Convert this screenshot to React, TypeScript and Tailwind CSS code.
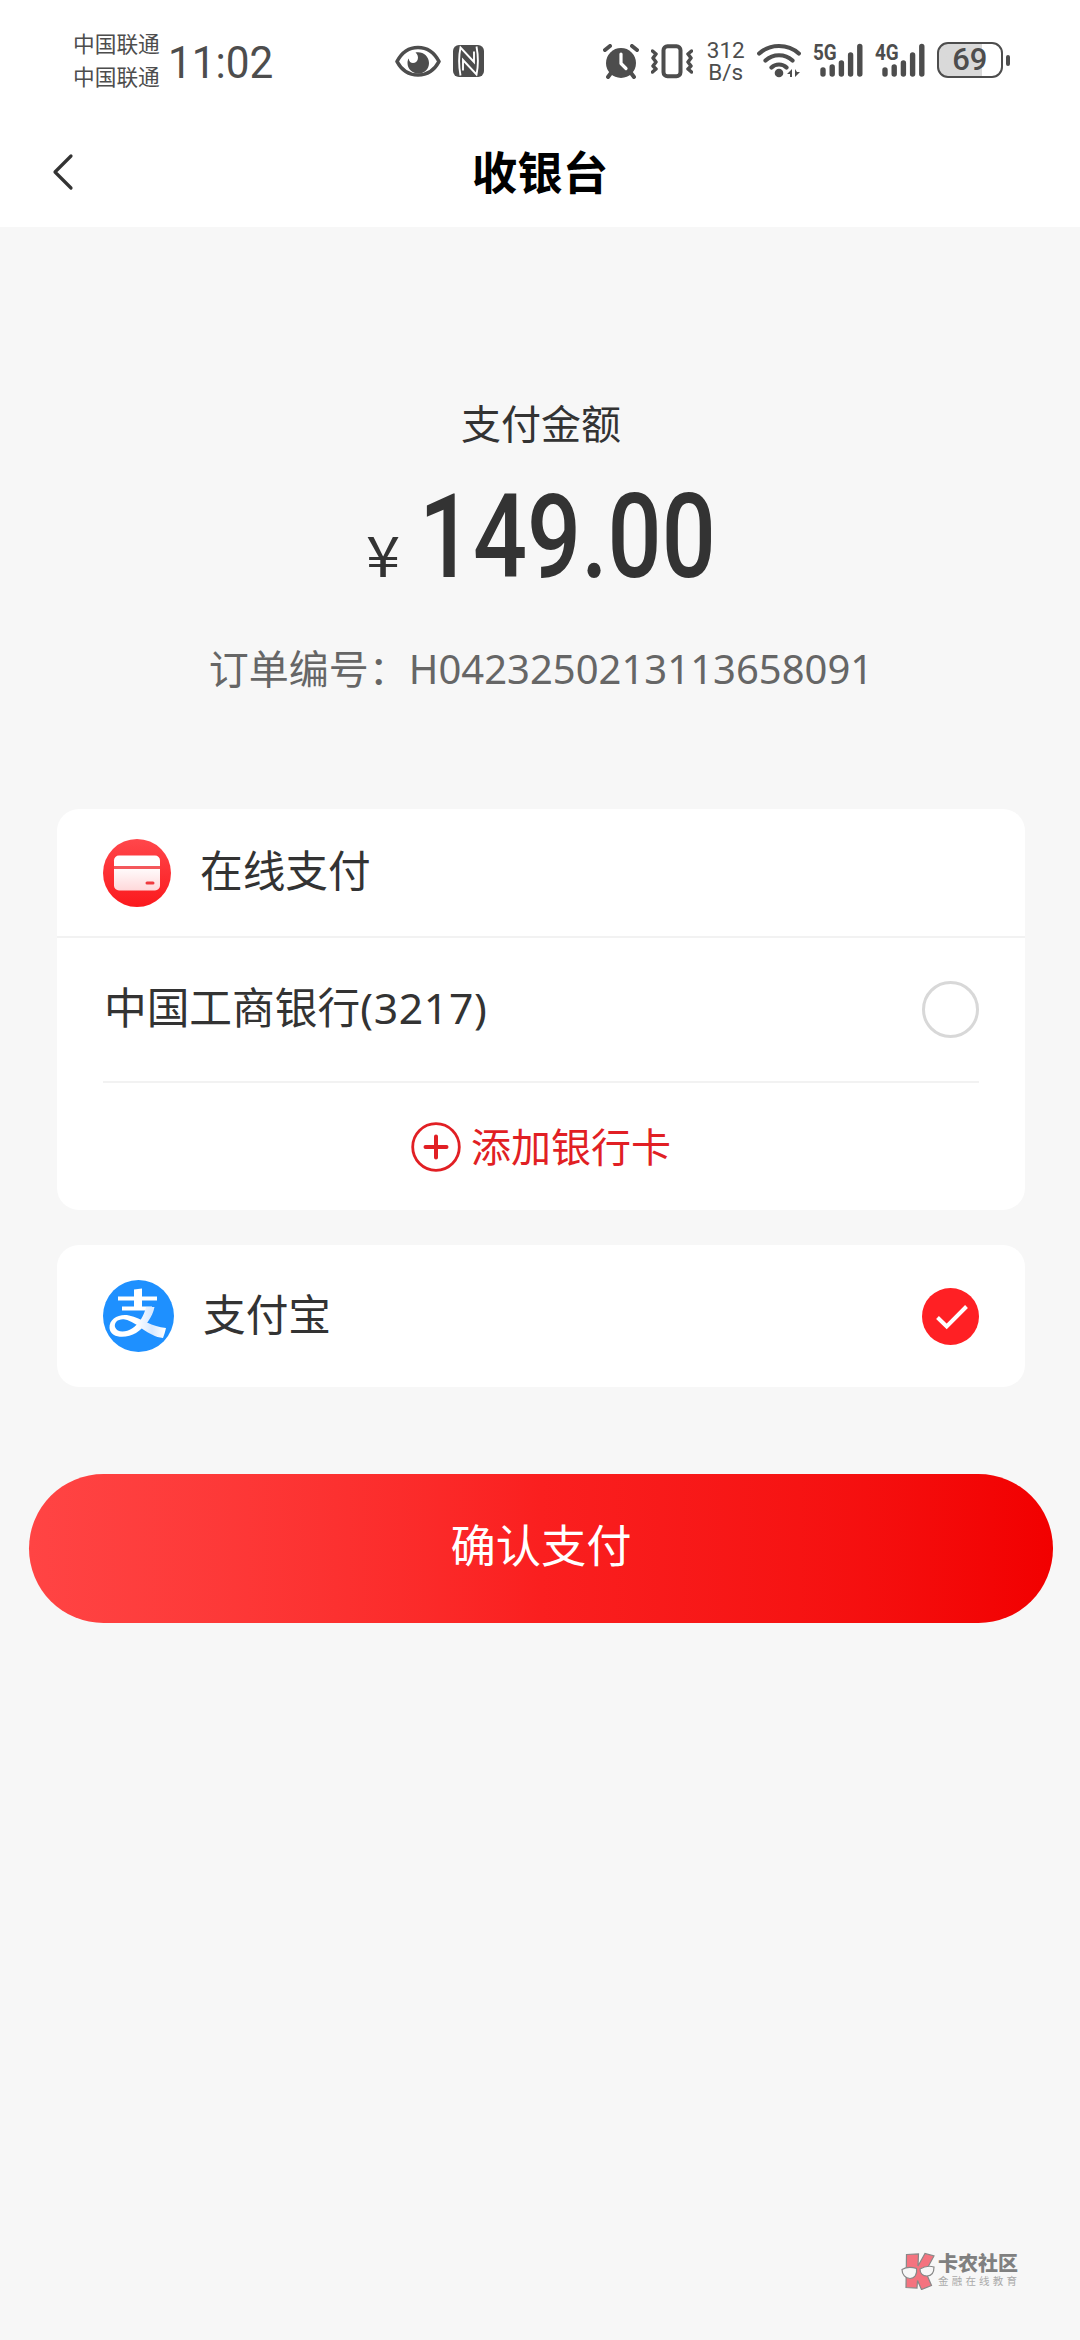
import React, { useState } from 'react';

type Method = 'icbc' | 'alipay';

const StatusBar: React.FC = () => {
    return (
        <div className="flex h-[116px] items-start text-[#4d4d4d]">
            <div className="ml-[73px] mt-[27px] flex flex-col text-[21.7px] leading-[33px]">
                <span>中国联通</span>
                <span>中国联通</span>
            </div>
            <div className="ml-[8px] mt-[36px] w-[106px] origin-left scale-x-[0.94] whitespace-nowrap font-[Roboto] text-[45px] leading-[53px]">11:02</div>

            <svg className="ml-[121px] mt-[45px] shrink-0" width="46" height="33" viewBox="0 0 46 33" fill="none">
                <path d="M2 16.500C7 7 15 2.500 23 2.500s16 4.500 21 14c-5 9.500-13 13.500-21 13.500S7 26 2 16.500z" stroke="#4d4d4d" strokeWidth="3.600" strokeLinejoin="round" />
                <path d="M20.500 7.500c7-1.500 13.500 3.500 13.500 10.500 0 6-4.500 10.500-10.500 10.500S12.500 24 12.500 18c0-2 .5-3.500 1.200-4.500.3 3 2 4.500 4.300 4.500 5 0 7-6.500 2.500-10.500z" fill="#4d4d4d" />
            </svg>
            <svg className="ml-[12px] mt-[45px] shrink-0" width="31" height="32" viewBox="0 0 31 32">
                <rect width="31" height="32" rx="6" fill="#4d4d4d" />
                <path d="M7.500 30.500C5.500 20 5.500 12 7.500 2.500L21 17V6.500M23.500 1.500c2 10.500 2 18.500 0 28L10 15v10.500" fill="none" stroke="#fff" strokeWidth="1.900" />
            </svg>

            <svg className="ml-[119px] mt-[44px] shrink-0" width="36" height="35" viewBox="0 0 36 35" fill="none">
                <circle cx="18" cy="19" r="15" fill="#4d4d4d" />
                <path d="M2 6l5-4M34 6l-5-4M8 29l-3 4M28 29l3 4" stroke="#4d4d4d" strokeWidth="4" strokeLinecap="round" />
                <path d="M18 10v9.500l5 5" stroke="#fff" strokeWidth="3.200" strokeLinecap="round" strokeLinejoin="round" />
            </svg>
            <svg className="ml-[12px] mt-[44px] shrink-0" width="42" height="35" viewBox="0 0 42 35" fill="none" stroke="#4d4d4d" strokeWidth="4">
                <rect x="12.500" y="2.200" width="17" height="30" rx="4" />
                <path d="M1.500 7l3.500 3-3 4 3 4-3 4 3 3-3.500 3M40.500 7l-3.500 3 3 4-3 4 3 4-3 3 3.500 3" strokeLinecap="round" strokeLinejoin="round" strokeWidth="3.500" />
            </svg>
            <div className="ml-[13px] mt-[39px] flex w-[40px] flex-col items-center font-[Roboto] text-[22.5px] leading-[22px]">
                <span>312</span>
                <span>B/s</span>
            </div>

            <svg className="ml-[11px] mt-[43px] shrink-0" width="44" height="36" viewBox="0 0 44 36" fill="none" stroke="#4d4d4d">
                <path d="M2.200 10.500c11-10 28.600-10 39.600 0M8.500 17.500c7.500-7 19.500-7 27 0M14.500 24.500c4-4 11-4 15 0" strokeWidth="4.200" strokeLinecap="round" />
                <circle cx="22" cy="30" r="4.300" fill="#4d4d4d" stroke="none" />
                <path d="M30 31l5-5v8h-2v-3zM38 26v8l5-5h-3z" fill="#4d4d4d" stroke="none" />
            </svg>
            <Signal label="5G" className="ml-[12px]" />
            <Signal label="4G" className="ml-[12px]" />

            <div className="ml-[12px] mt-[42px] flex items-center">
                <div className="flex h-[36px] w-[66px] items-center justify-center rounded-[11px] border-[2.500px] border-[#4d4d4d] bg-linear-to-r from-[#d9d9d9] from-69% to-white to-69% font-[Roboto] text-[31px] font-medium leading-[36px]">
                    69
                </div>
                <div className="ml-[3px] h-[11px] w-[4px] rounded-[2px] bg-[#4d4d4d]" />
            </div>
        </div>
    );
};

const Signal: React.FC<{ label: string; className: string }> = ({ label, className }) => (
    <div className={`relative mt-[43px] h-[35px] w-[50px] shrink-0 ${className}`}>
        <span className="absolute left-0 top-0 origin-left scale-x-[0.84] font-[Roboto] text-[22.5px] font-bold leading-[18px]">{label}</span>
        <svg width="50" height="35" viewBox="0 0 50 35" fill="none" stroke="#4d4d4d" strokeWidth="5.400" strokeLinecap="round">
            <path d="M10 27v4M19.200 24v7M28.400 20v11M37.600 12v19M46.800 3.500v27.500" />
        </svg>
    </div>
);

const CardIcon: React.FC = () => (
    <svg width="68" height="68" viewBox="0 0 68 68">
        <defs>
            <linearGradient id="cardBg" x1="0" y1="0" x2="0" y2="1">
                <stop offset="0" stopColor="#ff474b" />
                <stop offset="1" stopColor="#fb191d" />
            </linearGradient>
            <linearGradient id="cardFace" x1="0" y1="0" x2="0" y2="1">
                <stop offset="0.300" stopColor="#fff" />
                <stop offset="1" stopColor="#ffd8da" />
            </linearGradient>
        </defs>
        <circle cx="34" cy="34" r="34" fill="url(#cardBg)" />
        <rect x="11" y="16.500" width="46" height="35" rx="5" fill="url(#cardFace)" />
        <path d="M11 28.500h46" stroke="#f4585c" strokeWidth="3" />
        <path d="M44 44h6" stroke="#f03a3f" strokeWidth="3" strokeLinecap="round" />
    </svg>
);

const AlipayIcon: React.FC = () => (
    <svg width="71" height="72" viewBox="0 0 71 72" fill="none">
        <defs>
            <linearGradient id="ribbon" x1="10" y1="0" x2="62" y2="0" gradientUnits="userSpaceOnUse">
                <stop offset="0.450" stopColor="#fff" />
                <stop offset="0.750" stopColor="#d8e9ff" />
                <stop offset="1" stopColor="#fff" />
            </linearGradient>
        </defs>
        <ellipse cx="35.500" cy="36" rx="35.500" ry="36" fill="#1e90ff" />
        <path d="M15 18.500h39M19 28.500h30" stroke="#fff" strokeWidth="4" />
        <path d="M31 9.500l8-1V29h-8z" fill="#fff" />
        <path d="M43 27h8.500c-2 10-9 20-18.500 26-9 5.500-25.500 6-26.500-5-.5-9 9.500-14.500 19.500-12.500 13 3 23 11.500 37 12.500-.8 4-2 7-3 10C45 56.500 34 42 22 39.500c-7-1-11 3-10 7.500 2 6 11 5.500 17 1.500C36 44 41 36 43 27z" fill="url(#ribbon)" />
    </svg>
);

const Radio: React.FC<{ checked: boolean }> = ({ checked }) => {
    if (!checked) {
        return <span className="block size-[57px] rounded-full border-[3px] border-[#d8d8d8]" />;
    }
    return (
        <svg width="57" height="57" viewBox="0 0 57 57" fill="none">
            <circle cx="28.500" cy="28.500" r="28.500" fill="#ff2024" />
            <path d="M15.500 29.500l9.200 9L44.500 18.500" stroke="#fff" strokeWidth="4" />
        </svg>
    );
};

const Watermark: React.FC = () => (
    <div className="absolute left-[901px] top-[2252px] flex items-start">
        <svg width="35" height="38" viewBox="0 0 35 38" stroke="#888" strokeWidth="1.200">
            <path d="M5.500 2.500l12-.5-.5 12 7-12.500 9 2.500-8.500 15.500 6 14-10 4-4-9-.5 7.500-11-.5z" fill="#f4737f" />
            <path d="M1 17.500c4-2.500 10-2.500 14.500-1 1 6-2 10-6.500 10S1 22.500 1 17.500zM19 17c4-2.500 9-3.500 14-2 0 5.500-2.500 9-7 9s-7-3-7-7z" fill="#f7f7f7" />
        </svg>
        <div className="ml-[2px] flex flex-col whitespace-nowrap">
            <span className="text-[20px] font-black leading-[23px] text-[#808080]">卡农社区</span>
            <span className="text-[10.500px] leading-[13px] tracking-[3.200px] text-[#aaa]">金融在线教育</span>
        </div>
    </div>
);

const App: React.FC = () => {
    const [method, setMethod] = useState<Method>('alipay');

    return (
        <div className="relative h-[2340px] w-[1080px] overflow-hidden bg-[#f7f7f7] font-['Noto_Sans','Noto_Sans_CJK_SC',sans-serif] text-[#333]">
            <header className="h-[227px] bg-white">
                <StatusBar />
                <div className="grid h-[111px] grid-cols-[1fr_auto_1fr] items-center">
                    <button className="ml-[51px] w-[24px]" aria-label="返回">
                        <svg width="24" height="38" viewBox="0 0 24 38" fill="none" stroke="#333" strokeWidth="3.200" strokeLinecap="round" strokeLinejoin="round">
                            <path d="M20 3L4 19l16 16" />
                        </svg>
                    </button>
                    <h1 className="text-[45.500px] font-bold leading-[60px] text-black">收银台</h1>
                </div>
            </header>

            <section className="flex flex-col items-center pt-[167px]">
                <p className="pl-[2px] text-[40px] leading-[60px]">支付金额</p>
                <div className="mt-[26px] flex h-[115px] w-[350px] items-baseline">
                    <span className="w-[54px] shrink-0 pl-px font-['Noto_Sans_CJK_SC'] text-[56px] leading-[115px]">
                        <span className="inline-block origin-left scale-x-[1.1]">¥</span>
                    </span>
                    <span className="origin-left scale-x-[0.82] font-[Roboto] text-[116px] font-medium leading-[115px]">149.00</span>
                </div>
                <p className="mt-[44px] whitespace-nowrap pl-[2px] text-[40px] leading-[60px] text-[#666]">订单编号：H0423250213113658091</p>
            </section>

            <main className="mx-[57px] mt-[110px] w-[968px]">
                <div className="h-[401px] rounded-[22px] bg-white">
                    <div className="flex h-[129px] items-center border-b-2 border-[#f2f2f2] pl-[46px]">
                        <CardIcon />
                        <span className="mb-[3px] ml-[29px] text-[42.700px] leading-[60px]">在线支付</span>
                    </div>
                    <div className="mx-[46px] flex h-[145px] items-center justify-between border-b-2 border-[#f2f2f2]" onClick={() => setMethod('icbc')}>
                        <span className="mb-[4px] pl-px text-[42.700px] leading-[60px]">中国工商银行<span className="tracking-[0.700px]">(3217)</span></span>
                        <Radio checked={method === 'icbc'} />
                    </div>
                    <button className="flex h-[127px] w-full items-center justify-center gap-[10px] text-[#e11f24]">
                        <svg width="50" height="50" viewBox="0 0 50 50" fill="none" stroke="currentColor" strokeLinecap="round">
                            <circle cx="25" cy="25" r="23.300" strokeWidth="2.800" />
                            <path d="M14.500 25h21M25 14.500v21" strokeWidth="4" />
                        </svg>
                        <span className="text-[40px] leading-[60px]">添加银行卡</span>
                    </button>
                </div>

                <div className="mt-[35px] flex h-[142px] items-center justify-between rounded-[22px] bg-white px-[46px]" onClick={() => setMethod('alipay')}>
                    <div className="flex items-center">
                        <AlipayIcon />
                        <span className="mb-[3px] ml-[29px] text-[42.700px] leading-[60px]">支付宝</span>
                    </div>
                    <Radio checked={method === 'alipay'} />
                </div>
            </main>

            <button className="ml-[29px] mt-[87px] flex h-[149px] w-[1024px] items-center justify-center rounded-full bg-linear-to-r from-[#ff4444] via-[#fa1f1f] to-[#f20000] pb-[6px] text-[45.300px] leading-[60px] text-white">
                确认支付
            </button>

            <Watermark />
        </div>
    );
};

export default App;
